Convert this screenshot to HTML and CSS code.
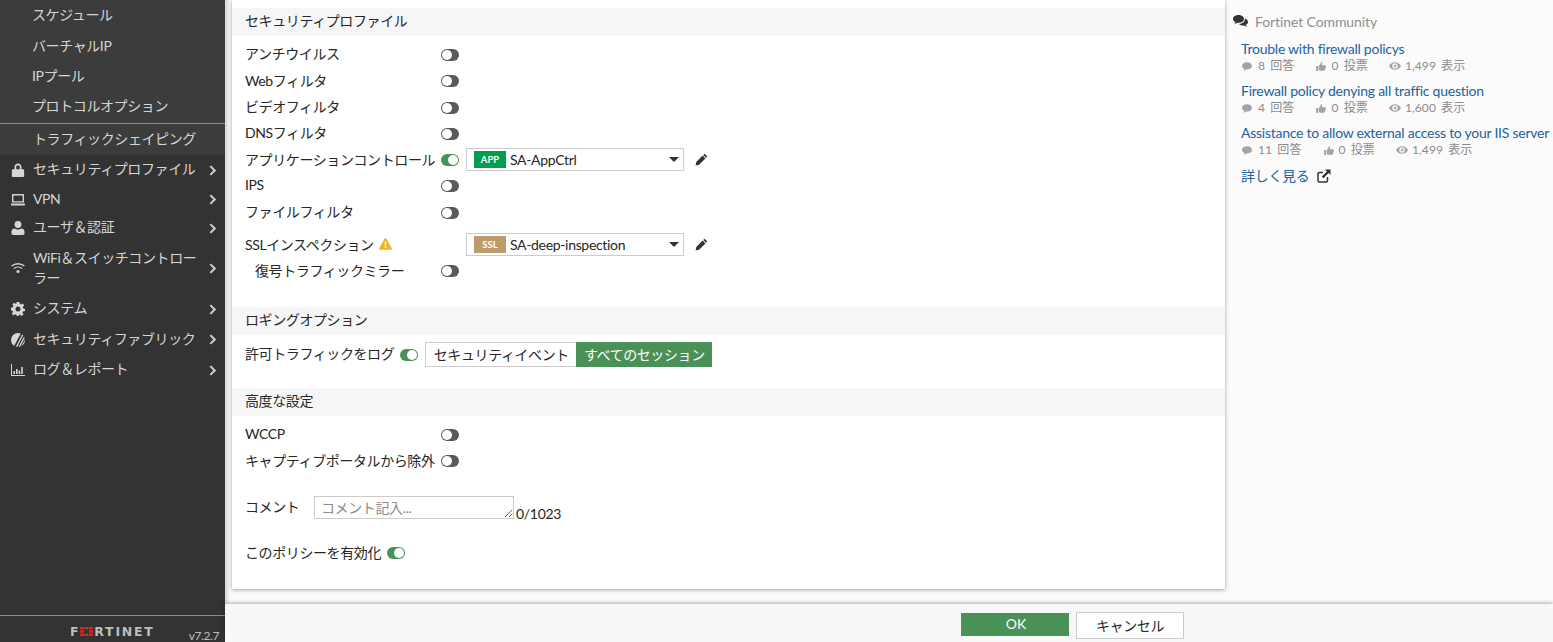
FILE: index.html
```html
<!DOCTYPE html>
<html lang="ja">
<head>
<meta charset="utf-8">
<title>Firewall Policy</title>
<link rel="stylesheet" href="styles.css">
</head>
<body>
<svg class="defs" width="0" height="0" aria-hidden="true">
  <defs>
    <symbol id="i-chev" viewBox="0 0 8 12"><path d="M1.5 1 L6.5 6 L1.5 11" fill="none" stroke="currentColor" stroke-width="2.4"/></symbol>
    <symbol id="i-pencil" viewBox="0 0 14 14"><path d="M10.2 .8 L13.2 3.8 L11.9 5.1 L8.9 2.1 Z M8.2 2.8 L11.2 5.8 L4.4 12.6 L.6 13.4 L1.4 9.6 Z" fill="#333"/></symbol>
    <symbol id="i-comment" viewBox="0 0 12 10"><path d="M6 0 C9.3 0 12 1.9 12 4.3 C12 6.7 9.3 8.6 6 8.6 L4.9 8.5 C4.1 9.3 3 9.9 1.6 10 C2.3 9.3 2.7 8.6 2.8 7.8 C1.1 7 0 5.8 0 4.3 C0 1.9 2.7 0 6 0 Z" fill="currentColor"/></symbol>
    <symbol id="i-thumb" viewBox="0 0 12 11"><path d="M0 5 H2.4 V11 H0 Z M3.2 5 L5.4 2.4 L5.8 0 C7.2 0 7.6 1.2 7.2 3 L7 4 H11 C12 4 12.2 5 11.7 5.6 C12.1 6.2 12 7 11.4 7.4 C11.6 8 11.4 8.8 10.8 9 C10.9 9.8 10.4 10.6 9.6 10.6 H5.4 L3.2 9.8 Z" fill="currentColor"/></symbol>
    <symbol id="i-eye" viewBox="0 0 14 9"><path fill-rule="evenodd" d="M7 0 C10.2 0 12.8 2 14 4.5 C12.8 7 10.2 9 7 9 C3.8 9 1.2 7 0 4.5 C1.2 2 3.8 0 7 0 Z M7 1.3 A3.2 3.2 0 1 0 7 7.7 A3.2 3.2 0 1 0 7 1.3 Z M7 2.8 A1.7 1.7 0 1 1 5.3 4.5 C6 4.7 6.9 3.8 7 2.8 Z" fill="currentColor"/></symbol>
    <clipPath id="fabric-clip"><circle cx="7" cy="7" r="7"/></clipPath>
  </defs>
</svg>
<div class="app">
  <nav class="sidebar">
    <div class="submenu">
      <a class="sub-item">スケジュール</a>
      <a class="sub-item">バーチャルIP</a>
      <a class="sub-item">IPプール</a>
      <a class="sub-item">プロトコルオプション</a>
      <a class="sub-item sub-last">トラフィックシェイピング</a>
    </div>
    <div class="menu">
      <a class="menu-item">
        <svg class="mi" viewBox="0 0 14 16"><path fill-rule="evenodd" d="M3 7 V4.5 C3 2 4.8 .5 7 .5 C9.2 .5 11 2 11 4.5 V7 H12.5 C13.3 7 14 7.6 14 8.4 V14.6 C14 15.4 13.3 16 12.5 16 H1.5 C.7 16 0 15.4 0 14.6 V8.4 C0 7.6 .7 7 1.5 7 Z M5 7 H9 V4.6 C9 3.4 8.1 2.5 7 2.5 C5.9 2.5 5 3.4 5 4.6 Z" fill="currentColor"/></svg>
        <span class="mt">セキュリティプロファイル</span><svg class="chev"><use href="#i-chev"/></svg>
      </a>
      <a class="menu-item item-vpn">
        <svg class="mi" viewBox="0 0 14 12"><path fill-rule="evenodd" d="M2 0 H12 C12.6 0 13 .4 13 1 V8.5 H1 V1 C1 .4 1.4 0 2 0 Z M2.4 1.4 V7.2 H11.6 V1.4 Z M0 9.4 H14 V10.4 C14 11 13.6 11.4 13 11.4 H1 C.4 11.4 0 11 0 10.4 Z" fill="currentColor"/></svg>
        <span class="mt">VPN</span><svg class="chev"><use href="#i-chev"/></svg>
      </a>
      <a class="menu-item item-user">
        <svg class="mi" viewBox="0 0 14 15"><path d="M7 0 A3.7 3.7 0 1 1 7 7.4 A3.7 3.7 0 1 1 7 0 Z M3.4 8 C4.4 8.7 5.6 9 7 9 C8.4 9 9.6 8.7 10.6 8 C12.8 8 14 9.6 14 11.8 V13.2 C14 14.2 13.2 15 12.2 15 H1.8 C.8 15 0 14.2 0 13.2 V11.8 C0 9.6 1.2 8 3.4 8 Z" fill="currentColor"/></svg>
        <span class="mt">ユーザ＆認証</span><svg class="chev"><use href="#i-chev"/></svg>
      </a>
      <a class="menu-item item-wifi">
        <svg class="mi" viewBox="0 0 14 11"><g fill="none" stroke="currentColor" stroke-width="1.4"><path d="M.6 3.6 C4.2 .4 9.8 .4 13.4 3.6"/><path d="M3 6 C5.3 4.1 8.7 4.1 11 6"/></g><circle cx="7" cy="9" r="1.6" fill="currentColor"/></svg>
        <span class="mt mt-wifi">WiFi＆スイッチコントローラー</span><svg class="chev"><use href="#i-chev"/></svg>
      </a>
      <a class="menu-item">
        <svg class="mi" viewBox="0 0 14 14"><path fill-rule="evenodd" d="M5.6 0 H8.4 L8.8 1.9 L10.1 2.4 L11.8 1.4 L13.2 3.6 L11.7 4.9 L12 6.2 L14 6.9 V9.1 L12 9.6 L11.5 10.9 L12.6 12.5 L10.6 14 L9.1 12.6 L7.9 12.9 L7.9 14 H6.1 L5.2 12.7 L3.9 12.3 L2.3 13.4 L.8 11.5 L2 10 L1.7 8.9 L0 8.3 V5.7 L1.9 5.2 L2.5 3.9 L1.4 2.3 L3.4 .8 L4.9 2 L5.2 1.9 Z M7 4.5 A2.5 2.5 0 1 0 7 9.5 A2.5 2.5 0 1 0 7 4.5 Z" fill="currentColor"/></svg>
        <span class="mt">システム</span><svg class="chev"><use href="#i-chev"/></svg>
      </a>
      <a class="menu-item">
        <svg class="mi" viewBox="0 0 14 14"><g clip-path="url(#fabric-clip)"><path d="M0 0 H10 L2.6 14 H0 Z" fill="currentColor"/><path d="M5.2 14.5 L12.4 .5 M7.7 15 L14.6 2 M10.2 15 L16 4" stroke="currentColor" stroke-width="1.3" fill="none"/></g></svg>
        <span class="mt">セキュリティファブリック</span><svg class="chev"><use href="#i-chev"/></svg>
      </a>
      <a class="menu-item">
        <svg class="mi" viewBox="0 0 14 12"><path d="M0 0 H1 V11 H14 V12 H0 Z M2.4 7 H4 V10 H2.4 Z M5 5 H6.6 V10 H5 Z M7.6 6.4 H9.2 V10 H7.6 Z M10.2 3 H11.8 V10 H10.2 Z" fill="currentColor"/></svg>
        <span class="mt">ログ＆レポート</span><svg class="chev"><use href="#i-chev"/></svg>
      </a>
    </div>
    <div class="brand">
      <span class="logo">F<svg class="logo-o" viewBox="0 0 13 9"><g fill="#d8291f"><rect x="0" y="0" width="4" height="2.4"/><rect x="4.6" y="0" width="3.8" height="2.4"/><rect x="9" y="0" width="4" height="2.4"/><rect x="0" y="3.3" width="4" height="2.4"/><rect x="9" y="3.3" width="4" height="2.4"/><rect x="0" y="6.6" width="4" height="2.4"/><rect x="4.6" y="6.6" width="3.8" height="2.4"/><rect x="9" y="6.6" width="4" height="2.4"/></g></svg>RTINET</span>
      <span class="version">v7.2.7</span>
    </div>
  </nav>

  <div class="main">
    <div class="content">
      <form class="card">
        <h3 class="section-head">セキュリティプロファイル</h3>
        <div class="row"><label class="lbl">アンチウイルス</label><i class="tg"></i></div>
        <div class="row"><label class="lbl">Webフィルタ</label><i class="tg"></i></div>
        <div class="row"><label class="lbl">ビデオフィルタ</label><i class="tg"></i></div>
        <div class="row"><label class="lbl">DNSフィルタ</label><i class="tg"></i></div>
        <div class="row"><label class="lbl">アプリケーションコントロール</label><i class="tg on"></i>
          <div class="select"><b class="tag tag-app">APP</b><span class="sel-name">SA-AppCtrl</span><span class="caret"></span></div>
          <svg class="pencil"><use href="#i-pencil"/></svg>
        </div>
        <div class="row"><label class="lbl">IPS</label><i class="tg"></i></div>
        <div class="row"><label class="lbl">ファイルフィルタ</label><i class="tg"></i></div>
        <div class="row row-ssl"><label class="lbl">SSLインスペクション
          <svg class="warn" viewBox="0 0 14 13"><path d="M7 0 C7.5 0 7.9 .3 8.1 .7 L13.8 11 C14.2 11.8 13.7 12.6 12.8 12.6 H1.2 C.3 12.6 -.2 11.8 .2 11 L5.9 .7 C6.1 .3 6.5 0 7 0 Z" fill="#f0b429"/><path d="M6.2 3.8 H7.8 L7.6 8.4 H6.4 Z M6.2 9.3 H7.8 V10.9 H6.2 Z" fill="#fff"/></svg></label><span class="tg-space"></span>
          <div class="select"><b class="tag tag-ssl">SSL</b><span class="sel-name">SA-deep-inspection</span><span class="caret"></span></div>
          <svg class="pencil"><use href="#i-pencil"/></svg>
        </div>
        <div class="row"><label class="lbl lbl-indent">復号トラフィックミラー</label><i class="tg"></i></div>

        <h3 class="section-head head-log">ロギングオプション</h3>
        <div class="row row-log"><label class="lbl-auto">許可トラフィックをログ</label><i class="tg on tg-log"></i>
          <div class="seg"><span class="seg-off">セキュリティイベント</span><span class="seg-on">すべてのセッション</span></div>
        </div>

        <h3 class="section-head head-adv">高度な設定</h3>
        <div class="row"><label class="lbl">WCCP</label><i class="tg"></i></div>
        <div class="row"><label class="lbl">キャプティブポータルから除外</label><i class="tg"></i></div>
        <div class="row row-comment"><label class="lbl-comment">コメント</label>
          <textarea class="comment" placeholder="コメント記入..."></textarea><span class="count">0/1023</span>
        </div>
        <div class="row row-enable"><label class="lbl-auto">このポリシーを有効化</label><i class="tg on tg-enable"></i></div>
      </form>

      <aside class="aside">
        <h4 class="aside-title">
          <svg class="comments-ic" viewBox="0 0 15 12"><path d="M5.5 0 C8.5 0 11 1.7 11 3.9 C11 6.1 8.5 7.8 5.5 7.8 L4.4 7.7 C3.6 8.4 2.6 8.9 1.4 9 C2 8.4 2.4 7.7 2.5 7.1 C1 6.4 0 5.2 0 3.9 C0 1.7 2.5 0 5.5 0 Z" fill="#333"/><path d="M11.9 3.6 C13.7 4.2 15 5.4 15 6.9 C15 8.1 14.2 9.2 12.9 9.8 C13 10.5 13.4 11.2 14 11.8 C12.9 11.7 11.9 11.2 11.1 10.5 L10.3 10.6 C8.6 10.6 7 10 6.1 9 C9.3 8.9 12.1 6.9 11.9 3.6 Z" fill="#333"/></svg>
          Fortinet Community</h4>
        <div class="topic">
          <a class="topic-link">Trouble with firewall policys</a>
          <div class="stats"><span class="st st-a"><svg class="si"><use href="#i-comment"/></svg>8 回答</span><span class="st st-b"><svg class="si si-th"><use href="#i-thumb"/></svg>0 投票</span><span class="st"><svg class="si si-eye"><use href="#i-eye"/></svg>1,499 表示</span></div>
        </div>
        <div class="topic">
          <a class="topic-link">Firewall policy denying all traffic question</a>
          <div class="stats"><span class="st st-a"><svg class="si"><use href="#i-comment"/></svg>4 回答</span><span class="st st-b"><svg class="si si-th"><use href="#i-thumb"/></svg>0 投票</span><span class="st"><svg class="si si-eye"><use href="#i-eye"/></svg>1,600 表示</span></div>
        </div>
        <div class="topic">
          <a class="topic-link">Assistance to allow external access to your IIS server</a>
          <div class="stats"><span class="st st-a"><svg class="si"><use href="#i-comment"/></svg>11 回答</span><span class="st st-b"><svg class="si si-th"><use href="#i-thumb"/></svg>0 投票</span><span class="st"><svg class="si si-eye"><use href="#i-eye"/></svg>1,499 表示</span></div>
        </div>
        <a class="more">詳しく見る
          <svg class="ext" viewBox="0 0 14 14"><path d="M10.5 8 V11.5 C10.5 12.3 9.9 13 9 13 H2.5 C1.7 13 1 12.3 1 11.5 V5 C1 4.1 1.7 3.5 2.5 3.5 H6" fill="none" stroke="currentColor" stroke-width="1.5"/><path d="M8 .5 H13.5 V6 L11.6 4.1 L6.4 9.2 L4.8 7.6 L9.9 2.4 Z" fill="currentColor"/></svg></a>
      </aside>
    </div>
    <footer class="footer">
      <button class="btn btn-ok" type="button">OK</button>
      <button class="btn btn-cancel" type="button">キャンセル</button>
    </footer>
  </div>
</div>
</body>
</html>
```
FILE: styles.css
```css
* { box-sizing: border-box; }
html, body { margin: 0; height: 100%; overflow: hidden; }
body {
  font-family: Lato, "Noto Sans CJK JP", sans-serif;
  font-size: 14px;
  color: #262626;
  background: #fff;
}
.defs { position: absolute; }
.app { display: flex; height: 642px; }

/* sidebar */
.sidebar {
  width: 225px;
  flex: none;
  background: #333;
  color: #d6d6d6;
  display: flex;
  flex-direction: column;
  letter-spacing: -0.4px;
}
.submenu { background: #3c3c3c; height: 155px; }
.sub-item {
  display: flex;
  align-items: center;
  height: 30.4px;
  padding-left: 32px;
  padding-bottom: 2px;
}
.sub-last {
  height: 32px;
  padding-left: 33px;
  padding-bottom: 3px;
  margin-top: 1px;
  border-top: 1px solid #8a8a8a;
}
.menu { flex: 1; display: flex; flex-direction: column; }
.menu-item {
  display: flex;
  align-items: center;
  height: 30.3px;
  padding-left: 11px;
  line-height: 20px;
}
.item-vpn { height: 28.5px; }
.item-user { height: 28.5px; }
.item-wifi { height: 52px; }
.mi { width: 14px; height: 14px; flex: none; margin-right: 8px; color: #d6d6d6; }
.mt { width: 176px; flex: none; padding-bottom: 2px; }
.mt-wifi { padding-bottom: 0; }
.chev { width: 7px; height: 11px; color: #ccc; flex: none; }
.brand {
  height: 27px;
  border-top: 1px solid #8a8a8a;
  display: flex;
  align-items: flex-end;
  justify-content: space-between;
  padding: 0 6px 0 70px;
  letter-spacing: 0;
}
.logo {
  display: flex;
  align-items: center;
  height: 9px;
  margin-bottom: 6px;
  font: bold 12.5px/9px "DejaVu Sans", sans-serif;
  letter-spacing: 1.75px;
  color: #bdbdbd;
}
.logo-o { width: 13px; height: 9px; margin: 0 1px 0 0; }
.version { margin-bottom: -1px; font-size: 12px; line-height: 14px; letter-spacing: -.4px; color: #b5c0c8; }

/* main */
.main { flex: 1; display: flex; flex-direction: column; min-width: 0; }
.content {
  height: 604px;
  display: flex;
  background: #fbfbfb;
  box-shadow: inset 6px 0 3px -3px #d9d9d9;
}
.card {
  width: 993px;
  height: 589px;
  margin-left: 7px;
  flex: none;
  padding-top: 8px;
  background: #fff;
  box-shadow: 0 1px 4px rgba(0,0,0,.35);
}
.section-head {
  margin: 0;
  height: 28px;
  padding-left: 13px;
  background: #f6f6f6;
  font-size: 14px;
  font-weight: 400;
  line-height: 25px;
  letter-spacing: -0.4px;
}
.head-log { margin-top: 22.5px; }
.head-adv { margin-top: 20px; }
.row {
  display: flex;
  align-items: center;
  height: 26.3px;
  padding-left: 13px;
  letter-spacing: -0.4px;
}
.section-head + .row { margin-top: 5.8px; }
.lbl, .lbl-auto { padding-bottom: 3px; }
.lbl { width: 196px; flex: none; display: flex; align-items: center; }
.lbl-indent { padding-left: 10px; }
.lbl-auto { flex: none; }
.tg {
  display: block;
  position: relative;
  width: 18px;
  height: 12px;
  flex: none;
  border-radius: 6px;
  background: #5a5a5a;
}
.tg::after {
  content: "";
  position: absolute;
  left: 1px;
  top: 1px;
  width: 10px;
  height: 10px;
  border-radius: 50%;
  background: #fff;
}
.tg.on { background: #4a9158; }
.tg.on::after { left: 7px; }
.tg-space { width: 18px; flex: none; }
.select {
  display: flex;
  align-items: center;
  width: 218px;
  height: 23px;
  margin: 0 0 2px 7px;
  padding-left: 7px;
  border: 1px solid #ccc;
  background: #fff;
  letter-spacing: -0.33px;
}
.tag {
  width: 32px;
  height: 17px;
  flex: none;
  font-size: 9.5px;
  font-weight: 700;
  line-height: 17px;
  letter-spacing: 0;
  text-align: center;
  color: #fff;
}
.tag-app { background: #009e4f; }
.tag-ssl { background: #bd9b6b; }
.sel-name { margin-left: 4px; flex: 1; }
.caret {
  width: 0;
  height: 0;
  margin-right: 4px;
  border: 5px solid transparent;
  border-top: 5px solid #333;
  border-bottom: 0;
}
.pencil { width: 13px; height: 13px; margin: 0 0 2px 11px; flex: none; }
.warn { width: 13px; height: 12px; margin-left: 5px; flex: none; }
.row-ssl { margin-top: 6px; }
.section-head + .row-log { margin-top: 7px; height: 26px; }
.tg-log { margin-left: 6px; }
.seg {
  display: flex;
  height: 25px;
  margin-left: 7px;
  letter-spacing: -0.4px;
}
.seg span { display: flex; align-items: center; justify-content: center; padding-bottom: 2px; }
.seg-off { width: 151px; border: 1px solid #ccc; border-right: 0; background: #fff; }
.seg-on { width: 136px; background: #4a9158; color: #fff; }
.row-comment { align-items: flex-start; height: 24px; margin-top: 21.5px; }
.lbl-comment { width: 69px; flex: none; padding-top: 1px; line-height: 20px; }
.comment {
  width: 200px;
  height: 23px;
  margin: 0;
  padding: 1px 6px;
  border: 1px solid #ccc;
  font: 14px/19px Lato, "Noto Sans CJK JP", sans-serif;
  letter-spacing: -0.4px;
  resize: both;
  overflow: hidden;
}
.comment::placeholder { color: #8c8c8c; }
.count { align-self: flex-end; margin-left: 2px; line-height: 17px; transform: translateY(2px); letter-spacing: -0.3px; }
.row-enable { margin-top: 20px; }
.tg-enable { margin-left: 6px; }

/* aside */
.aside { flex: 1; padding: 0 0 0 9px; min-width: 0; white-space: nowrap; }
.aside-title {
  display: flex;
  align-items: center;
  height: 20px;
  margin: 11px 0 9px -1px;
  font-size: 14px;
  font-weight: 400;
  letter-spacing: -0.1px;
  color: #8f8f8f;
}
.comments-ic { width: 15px; height: 12px; margin-right: 7px; }
.topic { margin: 0 0 0 7px; height: 42px; }
.topic-link { display: block; line-height: 18px; color: #22629e; letter-spacing: -0.25px; }
.stats { display: flex; height: 16px; line-height: 16px; font-size: 12px; color: #8c8c8c; letter-spacing: .1px; word-spacing: 2px; }
.st { display: flex; align-items: center; }
.st-a { margin-right: 21px; }
.st-b { margin-right: 20px; }
.si { width: 10px; height: 9px; margin: 0 6px 0 1px; color: #a3a3a3; flex: none; }
.si-th { margin-right: 5px; }
.si-eye { width: 12px; height: 8px; margin-right: 4px; }
.more { display: flex; align-items: center; margin: 0 0 0 7px; line-height: 20px; color: #22629e; letter-spacing: -0.3px; }
.ext { width: 14px; height: 14px; margin-left: 7px; color: #333; }

/* footer */
.footer {
  flex: 1;
  display: flex;
  justify-content: flex-start;
  align-items: flex-start;
  gap: 7px;
  padding: 8px 0 0 736px;
  background: #f8f8f8;
  box-shadow: 0 -1px 4px rgba(0,0,0,.3);
  position: relative;
}
.btn {
  width: 108px;
  height: 27px;
  margin: 0;
  padding: 0 0 2px;
  font: 14px Lato, "Noto Sans CJK JP", sans-serif;
}
.btn-ok { height: 23px; margin-top: 1px; border: 0; background: #4a9158; color: #fff; padding-left: 2px; }
.btn-cancel { border: 1px solid #ccc; background: #fff; color: #262626; letter-spacing: -0.4px; }
```
